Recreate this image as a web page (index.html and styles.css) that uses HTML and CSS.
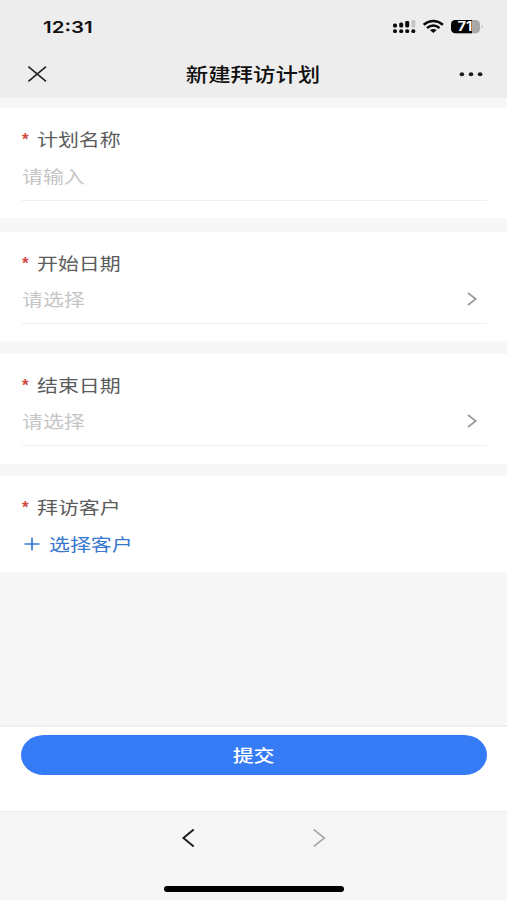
FILE: index.html
```html
<!DOCTYPE html>
<html lang="zh-CN">
<head>
<meta charset="utf-8">
<title>新建拜访计划</title>
<link rel="stylesheet" href="styles.css">
</head>
<body>
<div class="screen">
  <header class="top">
    <div class="status">
      <span class="time"><span class="wide">12:31</span></span>
      <svg class="status-icons" width="92" height="16" viewBox="0 0 92 16">
        <g fill="#0a0a0a">
          <rect x="1" y="4.5" width="4" height="4" rx="1.6"/>
          <rect x="7.2" y="3.5" width="4" height="5" rx="1.6"/>
          <rect x="13.2" y="2" width="4" height="6.5" rx="1.4"/>
          <rect x="1" y="10.3" width="4" height="3.8" rx="1.7"/>
          <rect x="7.2" y="10.3" width="4" height="3.8" rx="1.7"/>
          <rect x="13.2" y="10.3" width="4" height="3.8" rx="1.7"/>
          <rect x="19.3" y="10.3" width="4" height="3.8" rx="1.7"/>
        </g>
        <rect x="19.5" y="1" width="3.8" height="7.5" rx="1.2" fill="#c4c4c4"/>
        <g fill="none" stroke="#0a0a0a" stroke-width="2.4">
          <path d="M31.6 5.8Q41.3-1.6 51 5.8"/>
          <path d="M35 9Q41.3 4.2 47.6 9"/>
        </g>
        <path d="M37.9 11.1Q41.3 8.7 44.7 11.1L41.3 13.9Z" fill="#0a0a0a"/>
        <clipPath id="cell"><rect x="59" y="1" width="29" height="13.2" rx="4.3"/></clipPath>
        <g clip-path="url(#cell)">
          <rect x="59" y="0" width="30" height="15" fill="#a8a8a8"/>
          <rect x="59" y="0" width="21" height="15" fill="#050505"/>
        </g>
        <path d="M89.6 5.4Q91.5 7.5 89.6 9.6Z" fill="#a8a8a8"/>
        <text class="level" x="65.5" y="12" textLength="15" lengthAdjust="spacingAndGlyphs">71</text>
      </svg>
    </div>
    <div class="nav">
      <svg width="20" height="18" viewBox="0 0 20 18"><path d="M1.4 1.6L19 16.4M19 1.6L1.4 16.4" fill="none" stroke="#222" stroke-width="1.6"/></svg>
      <h1 class="title"><span class="wide">新建拜访计划</span></h1>
      <svg width="26" height="6" viewBox="0 0 26 6" fill="#1c1c1c"><ellipse cx="3.9" cy="3.2" rx="2.3" ry="2"/><ellipse cx="13" cy="3.2" rx="2.3" ry="2"/><ellipse cx="22.1" cy="3.2" rx="2.3" ry="2"/></svg>
    </div>
  </header>

  <main class="form">
    <section class="card">
      <div class="label"><span class="star">*</span><span class="wide">计划名称</span></div>
      <div class="field"><span class="wide">请输入</span></div>
    </section>
    <section class="card card-date">
      <div class="label"><span class="star">*</span><span class="wide">开始日期</span></div>
      <div class="field"><span class="wide">请选择</span>
        <svg width="12" height="14" viewBox="0 0 12 14"><path d="M1 1L8.8 7L1 13" fill="none" stroke="#999" stroke-width="1.7"/></svg>
      </div>
    </section>
    <section class="card card-end">
      <div class="label"><span class="star">*</span><span class="wide">结束日期</span></div>
      <div class="field"><span class="wide">请选择</span>
        <svg width="12" height="14" viewBox="0 0 12 14"><path d="M1 1L8.8 7L1 13" fill="none" stroke="#999" stroke-width="1.7"/></svg>
      </div>
    </section>
    <section class="card card-customer">
      <div class="label"><span class="star">*</span><span class="wide">拜访客户</span></div>
      <div class="add">
        <svg width="16" height="14" viewBox="0 0 16 14"><path d="M.5 7H15.5M8 .8V13.2" fill="none" stroke="#3878cf" stroke-width="1.7"/></svg>
        <span class="wide">选择客户</span>
      </div>
    </section>
  </main>

  <div class="actions">
    <button class="submit"><span class="wide">提交</span></button>
  </div>

  <footer class="browser">
    <div class="arrows">
      <svg width="14" height="20" viewBox="0 0 14 20"><path d="M12.7 1.5L2.4 10L12.7 18.5" fill="none" stroke="#1a1a1a" stroke-width="1.9"/></svg>
      <svg width="14" height="20" viewBox="0 0 14 20"><path d="M1.7 1.5L12.4 10L1.7 18.5" fill="none" stroke="#aaa" stroke-width="1.6"/></svg>
    </div>
    <div class="home"></div>
  </footer>
</div>
</body>
</html>
```
FILE: styles.css
```css
* { box-sizing: border-box; }
body {
  margin: 0;
  font-family: "Liberation Sans", "Noto Sans CJK SC", sans-serif;
  background: #f7f7f7;
}
svg { display: block; flex: none; }
.screen {
  width: 507px;
  height: 900px;
  display: flex;
  flex-direction: column;
  overflow: hidden;
}
.wide {
  display: inline-block;
  transform: scaleX(1.19);
  transform-origin: left center;
  white-space: nowrap;
}
.top { height: 98px; background: #ededed; }
.status {
  height: 54px;
  padding: 0 23px 0 43px;
  display: flex;
  align-items: center;
  justify-content: space-between;
}
.time {
  font: 600 16.5px/20px Inter, sans-serif;
  color: #111;
}
.time .wide { transform: scaleX(1.24); }
.level { font: 700 12.5px Inter, sans-serif; fill: #fff; }
.nav {
  height: 40px;
  padding: 0 23px 0 27px;
  display: flex;
  align-items: center;
  justify-content: space-between;
}
.title {
  margin: 0 0 0 2px;
  font-size: 19px;
  font-weight: 500;
  line-height: 28px;
  font-family: "Noto Sans CJK SC", sans-serif;
  color: #111;
}
.title .wide { transform: scaleX(1.18); transform-origin: center; }
.form {
  flex: 1;
  padding-top: 10px;
  display: flex;
  flex-direction: column;
  gap: 13px;
}
.card {
  height: 110px;
  padding: 18px 20px 0 22px;
  background: #fff;
  font: 17.6px/26px "Noto Sans CJK SC", sans-serif;
}
.card-date { height: 109px; margin-top: 1px; }
.card-end { padding-top: 18px; }
.card-date .field, .card-end .field { height: 48px; padding: 10px 8px 11px 0; }
.card-customer { height: 96px; margin-top: -1px; }
.label { display: flex; color: #5c5c5c; }
.card-date .label, .card-end .label { height: 26px; }
.star {
  width: 15px;
  color: #cf4a42;
  font: 700 17px/27px "Liberation Sans", sans-serif;
  height: 26px;
}
.field {
  height: 49px;
  padding: 11px 9px 11px 0;
  display: flex;
  align-items: center;
  justify-content: space-between;
  border-bottom: 1.5px solid #efefef;
  color: #c6c6c6;
}
.add {
  display: flex;
  align-items: center;
  gap: 9px;
  padding: 11px 0 0 2px;
  color: #3878cf;
}
.actions {
  height: 86px;
  padding: 8px 20px 0 21px;
  background: #fff;
  border-top: 2px solid #efefef;
}
.submit {
  display: block;
  width: 100%;
  height: 39.5px;
  padding: 0;
  border: 0;
  border-radius: 23px / 20px;
  background: #367bf6;
  color: #fff;
  font: 500 17.6px/37px "Noto Sans CJK SC", sans-serif;
}
.submit .wide { transform-origin: center; }
.browser {
  height: 89px;
  padding-top: 16px;
  border-top: 1px solid #ededed;
  background: #f6f6f6;
}
.arrows {
  display: flex;
  justify-content: center;
  gap: 117px;
}
.home {
  width: 180px;
  height: 6px;
  margin: 38px auto 0;
  border-radius: 3px;
  background: #000;
}
```
